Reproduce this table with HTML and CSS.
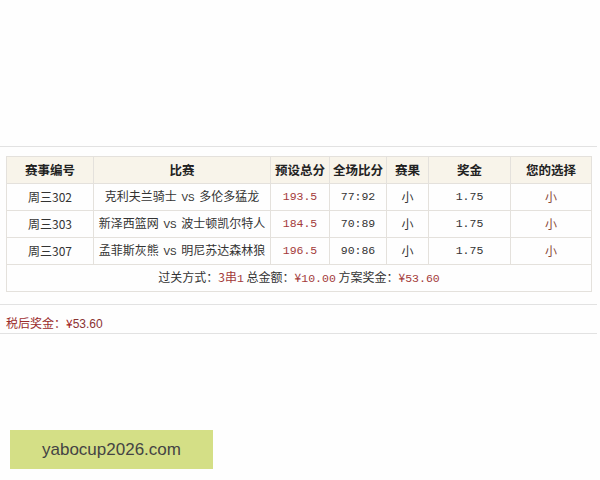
FILE: index.html
```html
<!DOCTYPE html>
<html lang="zh">
<head>
<meta charset="utf-8">
<link rel="stylesheet" href="styles.css">
</head>
<body>
<div class="page">
  <div class="rule top"></div>
  <table class="bet">
    <colgroup>
      <col class="c1"><col class="c2"><col class="c3"><col class="c4"><col class="c5"><col class="c6"><col class="c7">
    </colgroup>
    <thead>
      <tr><th>赛事编号</th><th>比赛</th><th>预设总分</th><th>全场比分</th><th>赛果</th><th>奖金</th><th>您的选择</th></tr>
    </thead>
    <tbody>
      <tr><td>周三302</td><td>克利夫兰骑士 <span class="vs">VS</span> 多伦多猛龙</td><td class="red num">193.5</td><td class="num">77:92</td><td>小</td><td class="num">1.75</td><td class="pick">小</td></tr>
      <tr><td>周三303</td><td>新泽西篮网 <span class="vs">VS</span> 波士顿凯尔特人</td><td class="red num">184.5</td><td class="num">70:89</td><td>小</td><td class="num">1.75</td><td class="pick">小</td></tr>
      <tr><td>周三307</td><td>孟菲斯灰熊 <span class="vs">VS</span> 明尼苏达森林狼</td><td class="red num">196.5</td><td class="num">90:86</td><td>小</td><td class="num">1.75</td><td class="pick">小</td></tr>
      <tr class="sum"><td colspan="7">过关方式：<span class="red">3串<span class="num">1</span></span> 总金额：<span class="red">¥<span class="num">10.00</span></span> 方案奖金：<span class="red">¥<span class="num">53.60</span></span></td></tr>
    </tbody>
  </table>
  <div class="rule mid"></div>
  <div class="after">税后奖金：<span class="yen">¥</span><span class="amt">53.60</span></div>
  <div class="rule"></div>
  <div class="brand">yabocup2026.com</div>
</div>
</body>
</html>
```

FILE: styles.css
```css
html, body {
  margin: 0;
  padding: 0;
  background: #fefefe;
}
body {
  font-family: "Noto Sans CJK SC", "Liberation Sans", sans-serif;
  font-size: 12px;
  color: #333;
}
.page {
  width: 600px;
  padding-top: 146px;
}
.rule {
  height: 0;
  border-top: 1px solid #e2e2e2;
  width: 597px;
}
.bet {
  margin: 9px 0 0 6px;
  width: 585px;
  border-collapse: collapse;
  table-layout: fixed;
}
.c1 { width: 87px; }
.c2 { width: 177px; }
.c3 { width: 59px; }
.c4 { width: 57px; }
.c5 { width: 42px; }
.c6 { width: 82px; }
.c7 { width: 81px; }
.bet th, .bet td {
  border: 1px solid #e4e1dc;
  height: 26px;
  padding: 0;
  text-align: center;
  line-height: 14px;
}
.bet th {
  background: #f8f4ea;
  font-weight: bold;
  font-size: 12.5px;
  color: #222;
}
.num, .vs {
  font-family: "Liberation Mono", "DejaVu Sans Mono", monospace;
  font-size: 11.5px;
}
.vs {
  font-size: 11px;
  margin: 0 2px;
}
.red { color: #a33a3a; }
.pick { color: #8a4a3a; }
.sum td { color: #333; }
.mid { margin-top: 12px; }
.after {
  color: #9b2b2b;
  padding: 9px 0 0 6px;
  height: 19px;
  line-height: 18px;
  font-size: 12px;
}
.after .yen { color: #a02020; }
.after .amt {
  font-family: "Liberation Sans", sans-serif;
  color: #8a3333;
}
.brand {
  margin: 96px 0 0 10px;
  width: 203px;
  height: 39px;
  background: #d4df86;
  color: #444;
  font-family: "Liberation Sans", "Noto Sans", sans-serif;
  font-size: 17px;
  line-height: 39px;
  padding-left: 32px;
  box-sizing: border-box;
}
```
